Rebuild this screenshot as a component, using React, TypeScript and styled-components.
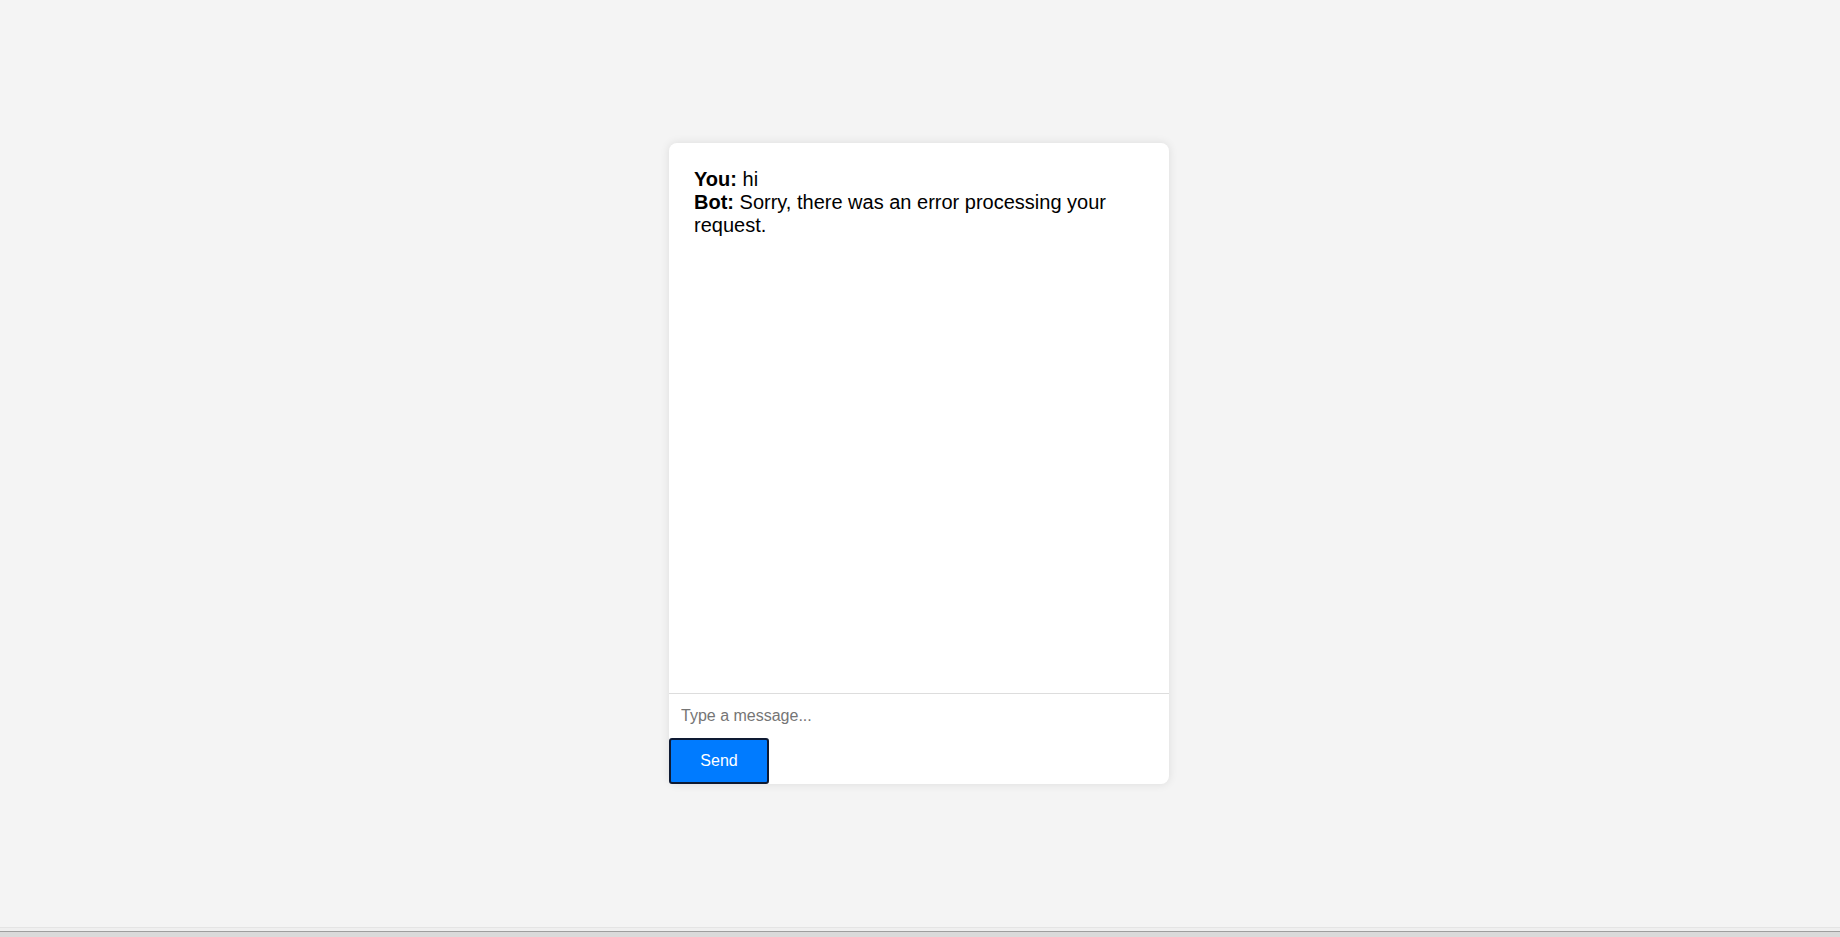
import React from "react";
import styled, { createGlobalStyle } from "styled-components";

const GlobalStyle = createGlobalStyle`
  html, body {
    margin: 0;
    padding: 0;
    background: #f4f4f4;
    font-family: "Liberation Sans", Arial, sans-serif;
  }
  * { box-sizing: border-box; }
`;

const Page = styled.div`
  height: 937px;
  display: flex;
  flex-direction: column;
  overflow: hidden;
`;

const Main = styled.main`
  flex: 1;
  display: flex;
  align-items: center;
  justify-content: center;
  padding-right: 2px;
`;

const BottomStrip = styled.div`
  height: 10px;
  flex: none;
  background: linear-gradient(
    to bottom,
    #e4e4e4 0px,
    #e4e4e4 1px,
    #efefef 1px,
    #efefef 4px,
    #9e9e9e 4px,
    #9e9e9e 5px,
    #dadada 5px,
    #dadada 10px
  );
`;

const ChatCard = styled.div`
  width: 500px;
  height: 641px;
  background: #ffffff;
  border-radius: 8px;
  box-shadow: 0 0 10px rgba(0, 0, 0, 0.1);
  display: flex;
  flex-direction: column;
`;

const Messages = styled.div`
  flex: 1;
  padding: 25px 25px 20px;
  font-size: 20px;
  color: #000;
  overflow-y: auto;
`;

const Message = styled.div`
  line-height: 23px;
`;

const Speaker = styled.strong`
  font-weight: bold;
`;

const MessageInput = styled.input`
  height: 45px;
  width: 100%;
  border: none;
  border-top: 1px solid #dddddd;
  padding: 0 12px;
  font-family: "Liberation Sans", Arial, sans-serif;
  font-size: 16px;
  outline: none;
  background: transparent;
  &::placeholder {
    color: #757575;
  }
`;

const SendButton = styled.button`
  width: 100px;
  height: 46px;
  background: #007bff;
  color: #ffffff;
  border: 2px solid #0e1a33;
  border-radius: 3px;
  font-family: "Liberation Sans", Arial, sans-serif;
  font-size: 16px;
  cursor: pointer;
  padding: 0;
`;

export default function App() {
  return (
    <>
      <GlobalStyle />
      <Page>
        <Main>
          <ChatCard>
            <Messages>
              <Message>
                <Speaker>You:</Speaker> hi
              </Message>
              <Message>
                <Speaker>Bot:</Speaker> Sorry, there was an error processing your request.
              </Message>
            </Messages>
            <MessageInput placeholder="Type a message..." />
            <div>
              <SendButton>Send</SendButton>
            </div>
          </ChatCard>
        </Main>
        <BottomStrip />
      </Page>
    </>
  );
}
